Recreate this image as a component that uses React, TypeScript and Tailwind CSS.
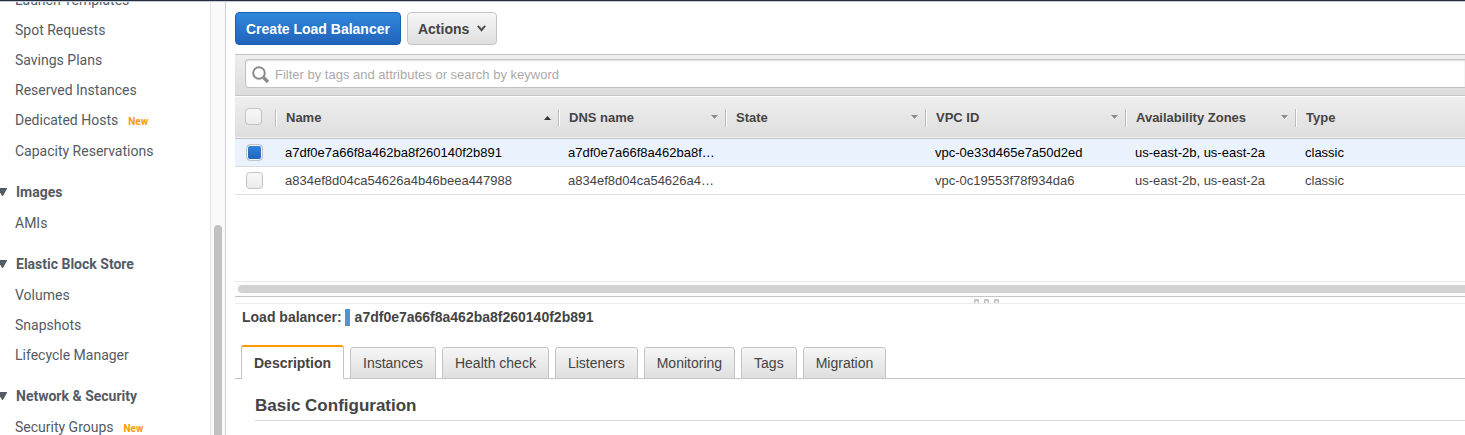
import type { ReactNode } from 'react';

type NavItem = { label: string; isNew?: boolean };
type NavGroup = { title?: string; items: NavItem[] };

const groups: NavGroup[] = [
  {
    items: [
      { label: 'Launch Templates' },
      { label: 'Spot Requests' },
      { label: 'Savings Plans' },
      { label: 'Reserved Instances' },
      { label: 'Dedicated Hosts', isNew: true },
      { label: 'Capacity Reservations' },
    ],
  },
  { title: 'Images', items: [{ label: 'AMIs' }] },
  {
    title: 'Elastic Block Store',
    items: [{ label: 'Volumes' }, { label: 'Snapshots' }, { label: 'Lifecycle Manager' }],
  },
  { title: 'Network & Security', items: [{ label: 'Security Groups', isNew: true }] },
];

const balancers = [
  {
    name: 'a7df0e7a66f8a462ba8f260140f2b891',
    dns: 'a7df0e7a66f8a462ba8f…',
    state: '',
    vpc: 'vpc-0e33d465e7a50d2ed',
    zones: 'us-east-2b, us-east-2a',
    type: 'classic',
    selected: true,
  },
  {
    name: 'a834ef8d04ca54626a4b46beea447988',
    dns: 'a834ef8d04ca54626a4…',
    state: '',
    vpc: 'vpc-0c19553f78f934da6',
    zones: 'us-east-2b, us-east-2a',
    type: 'classic',
    selected: false,
  },
];

const tabs = ['Description', 'Instances', 'Health check', 'Listeners', 'Monitoring', 'Tags', 'Migration'];

function Sidebar() {
  return (
    <nav
      aria-label="EC2"
      className="flex w-[226px] shrink-0 overflow-hidden border-r border-[#d2d3d8] font-[Roboto,sans-serif] text-sm text-[#545b64]"
    >
      <div className="-mt-[17px] min-w-0 flex-1">
        {groups.map((group, i) => (
          <section key={i}>
            {group.title && (
              <h2 className="mt-[11px] mb-px flex h-[30px] items-center font-bold">
                <svg width="8" height="8" viewBox="0 0 8 8" className="mr-2 shrink-0" fill="#545b64">
                  <path d="M0 0h6.6q.8 0 .4.8L3.2 7.4q-.7 1-1.4 0L0 4.3z" />
                </svg>
                {group.title}
              </h2>
            )}
            <ul>
              {group.items.map((item) => (
                <li key={item.label} className={item.isNew ? 'h-[31px] pl-[15px]' : 'h-[30px] pl-[15px]'}>
                  <a href="#" className="leading-[30px]">
                    {item.label}
                  </a>
                  {item.isNew && <span className="ml-[10px] text-[10px] font-bold text-[#f90]">New</span>}
                </li>
              ))}
            </ul>
          </section>
        ))}
      </div>
      <div className="w-[15px] border-l border-[#e4e4e4] bg-[#fafafa] px-[3px] pt-[223px]">
        <div className="h-full rounded-t-full bg-[#c1c1c1]" />
      </div>
    </nav>
  );
}

function Check({ label, checked }: { label: string; checked?: boolean }) {
  return (
    <input
      type="checkbox"
      aria-label={label}
      defaultChecked={checked}
      className="block size-[17px] appearance-none rounded-[4px] border border-[#c4c4c4] bg-gradient-to-b from-[#f8f8f8] to-[#ececec] bg-clip-padding checked:from-[#3186dc] checked:to-[#2164b8] checked:shadow-[inset_0_0_0_1px_#f4f4f4]"
    />
  );
}

function HeaderCell({ children, sort }: { children: ReactNode; sort?: 'up' | 'down' }) {
  return (
    <th scope="col" className="p-0 pt-[2px] text-left font-bold">
      <div className="flex h-[18px] items-center justify-between border-l border-[#bdbdbd] pr-[7px] pl-[10px] shadow-[inset_1px_0_0_#fff]">
        {children}
        {sort === 'up' && (
          <svg width="7" height="4" viewBox="0 0 7 4" fill="#333">
            <path d="M0 4 3.5 0 7 4z" />
          </svg>
        )}
        {sort === 'down' && (
          <svg width="7" height="5" viewBox="0 0 7 5">
            <path d="M0 1 3.5 5 7 1z" fill="#fff" />
            <path d="M0 0h7L3.5 4z" fill="#8a8a8a" />
          </svg>
        )}
      </div>
    </th>
  );
}

function BalancerTable() {
  return (
    <table className="w-full table-fixed border-collapse text-[13px] leading-4">
      <colgroup>
        <col className="w-10" />
        <col className="w-[283px]" />
        <col className="w-[167px]" />
        <col className="w-[200px]" />
        <col className="w-[200px]" />
        <col className="w-[170px]" />
        <col />
      </colgroup>
      <thead>
        <tr className="h-[42px] border-b border-[#c4c4c4] bg-gradient-to-b from-[#efefef] to-[#dedede] text-[#444] shadow-[inset_0_1px_0_#fff]">
          <th scope="col" className="p-0 pl-[10px]">
            <Check label="Select all load balancers" />
          </th>
          <HeaderCell sort="up">Name</HeaderCell>
          <HeaderCell sort="down">DNS name</HeaderCell>
          <HeaderCell sort="down">State</HeaderCell>
          <HeaderCell sort="down">VPC ID</HeaderCell>
          <HeaderCell sort="down">Availability Zones</HeaderCell>
          <HeaderCell>Type</HeaderCell>
        </tr>
      </thead>
      <tbody>
        {balancers.map((b) => (
          <tr
            key={b.name}
            className={
              b.selected
                ? 'h-7 border-b border-[#dcdcdc] bg-[#eaf2fe] text-black'
                : 'h-7 border-b border-[#dcdcdc] text-[#444]'
            }
          >
            <td className="p-0 pl-[11px]">
              <Check label={b.name} checked={b.selected} />
            </td>
            <td className="truncate p-0 pt-[2px] pl-[10px]">{b.name}</td>
            <td className="truncate p-0 pt-[2px] pl-[10px]">{b.dns}</td>
            <td className="truncate p-0 pt-[2px] pl-[10px]">{b.state}</td>
            <td className="truncate p-0 pt-[2px] pl-[10px]">{b.vpc}</td>
            <td className="truncate p-0 pt-[2px] pl-[10px]">{b.zones}</td>
            <td className="truncate p-0 pt-[2px] pl-[10px]">{b.type}</td>
          </tr>
        ))}
      </tbody>
    </table>
  );
}

function Splitter() {
  return (
    <div className="flex h-2 items-end justify-center border-t border-b border-t-[#c4c4c4] border-b-[#ebebeb] pl-[272px]">
      <div className="flex gap-[5px]">
        {[0, 1, 2].map((n) => (
          <svg key={n} width="5" height="4" viewBox="0 0 5 4">
            <path d="M0 4V1l1-1h3l1 1v3z" fill="#c2c2c2" />
            <path d="M1.500 4V2h2v2z" fill="#fff" />
          </svg>
        ))}
      </div>
    </div>
  );
}

function Details() {
  return (
    <section>
      <h2 className="flex h-[26px] items-center pl-[7px] text-sm font-bold">
        Load balancer:
        <span className="mr-[5px] ml-[3px] h-[17px] w-[5px] bg-[#5294d2]" />
        {balancers[0].name}
      </h2>
      <div role="tablist" className="mt-[14px] flex h-[35px] items-end text-sm">
        <span className="h-px w-[6px] bg-[#c4c4c4]" />
        {tabs.map((tab, i) => (
          <div key={tab} className="flex items-end">
            {i === 0 ? (
              <button
                role="tab"
                aria-selected="true"
                className="h-[34px] rounded-t-[3px] border-x border-t-2 border-x-[#c4c4c4] border-t-[#f90] px-3 font-bold"
              >
                {tab}
              </button>
            ) : (
              <button
                role="tab"
                aria-selected="false"
                className="h-8 rounded-t-[3px] border border-[#c4c4c4] bg-gradient-to-b from-[#f6f6f6] to-[#dfdfdf] px-3"
              >
                {tab}
              </button>
            )}
            <span className="h-px w-[6px] bg-[#c4c4c4]" />
          </div>
        ))}
        <span className="h-px flex-1 bg-[#c4c4c4]" />
      </div>
      <div role="tabpanel" className="pt-[15px] pl-5">
        <h3 className="border-b border-[#d6d6d6] pb-[2px] text-[17px] leading-6 font-bold">Basic Configuration</h3>
      </div>
    </section>
  );
}

export default function App() {
  return (
    <div className="flex h-screen flex-col overflow-hidden bg-white font-['Liberation_Sans',Arial,sans-serif] text-[#444]">
      <div className="h-[2px] shrink-0 border-b border-[#c5cad8] bg-[#232f3e]" />
      <div className="flex min-h-0 flex-1">
        <Sidebar />
        <main className="min-w-0 flex-1 pl-[9px]">
          <div className="flex gap-[6px] pt-[10px] pb-[9px] text-sm leading-4 font-bold">
            <button className="h-[33px] rounded-[4px] border border-[#1c5fb0] bg-gradient-to-b from-[#2f88dd] to-[#2163ba] px-[10px] text-white">
              Create Load Balancer
            </button>
            <button className="flex h-[33px] items-center rounded-[4px] border border-[#c4c4c4] bg-gradient-to-b from-[#f7f7f7] to-[#dfdfdf] px-[10px]">
              Actions
              <svg width="9" height="7" viewBox="0 0 9 7" className="ml-2" fill="none" stroke="#444">
                <path d="m.7.8 3.800 4.700L8.300.8" strokeWidth="1.600" />
                <path d="M2.500 1.200 4.500 3.800l2-2.600" strokeWidth=".6" />
              </svg>
            </button>
          </div>
          <div className="border-t border-b border-[#c4c4c4] bg-gradient-to-b from-[#eee] to-[#dcdcdc] pt-1 pb-[7px] pl-[10px]">
            <label className="flex h-[29px] items-center rounded-l-[4px] border border-r-0 border-[#c4c4c4] bg-white pl-[6px] shadow-[inset_0_1px_2px_#ddd]">
              <svg width="18" height="18" viewBox="0 0 18 18" fill="none" stroke="#8a8a8a" className="mt-[3px] shrink-0">
                <circle cx="7" cy="7" r="5.800" strokeWidth="2" />
                <path d="m11.500 11.500 4.500 4.500" strokeWidth="3.200" />
              </svg>
              <input
                type="text"
                aria-label="Filter load balancers"
                placeholder="Filter by tags and attributes or search by keyword"
                className="ml-[5px] flex-1 bg-transparent pt-[2px] text-[13px] outline-none placeholder:text-[#aaa]"
              />
            </label>
          </div>
          <div className="h-[185px]">
            <BalancerTable />
          </div>
          <div className="h-[15px] border-t border-[#ebebeb] bg-[#fcfcfc] pt-[3px] pl-[3px]">
            <div className="h-2 rounded-l-full bg-[#d2d2d2]" />
          </div>
          <Splitter />
          <Details />
        </main>
      </div>
    </div>
  );
}
